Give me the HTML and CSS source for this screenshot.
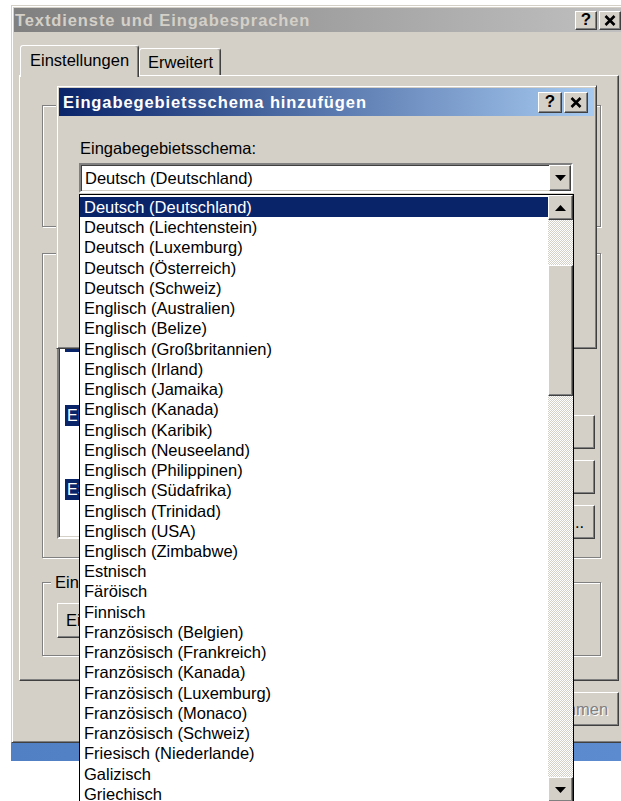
FILE: index.html
```html
<!DOCTYPE html>
<html lang="de">
<head>
<meta charset="utf-8">
<title>Textdienste und Eingabesprachen</title>
<link rel="stylesheet" href="styles.css">
</head>
<body>
<div class="desk">

  <!-- Main dialog (inactive, behind) -->
  <div class="win">
    <div class="cap off">
      <span class="cap-title">Textdienste und Eingabesprachen</span>
      <span class="cbtns">
        <span class="cbtn">?</span>
        <span class="cbtn"><svg width="12" height="11" viewBox="0 0 12 11"><path d="M1.5 1 L10.5 10 M10.5 1 L1.5 10" stroke="#000" stroke-width="2.6" fill="none"/></svg></span>
      </span>
    </div>

    <div class="tabs">
      <div class="tab sel">Einstellungen</div>
      <div class="tab plain">Erweitert</div>
    </div>

    <div class="panel">
      <!-- default locale group, covered by the modal dialog -->
      <div class="grp g1"></div>

      <!-- installed services -->
      <div class="grp g2">
        <div class="svc">
          <div class="tree">
            <div class="lang"><span class="flag">DE</span></div>
            <div class="leaf"></div>
            <div class="leaf"></div>
            <div class="lang"><span class="flag">EN</span></div>
            <div class="leaf"></div>
            <div class="leaf"></div>
            <div class="lang"><span class="flag">ES</span></div>
          </div>
          <div class="svc-btns">
            <div class="btn"></div>
            <div class="btn"></div>
            <div class="btn">Eigenschaften...</div>
          </div>
        </div>
      </div>

      <div class="grp g3">
        <span class="legend">Einstellungen</span>
        <div class="pref-row">
          <div class="btn auto">Eingabegebietsschema-Leiste...</div>
        </div>
      </div>
    </div>

    <div class="actions">
      <div class="btn">OK</div>
      <div class="btn">Abbrechen</div>
      <div class="btn off">Übernehmen</div>
    </div>
  </div>
  <div class="band"></div>

  <!-- Modal dialog on top -->
  <div class="dlg">
    <div class="cap on">
      <span class="cap-title">Eingabegebietsschema hinzufügen</span>
      <span class="cbtns">
        <span class="cbtn">?</span>
        <span class="cbtn"><svg width="12" height="11" viewBox="0 0 12 11"><path d="M1.5 1 L10.5 10 M10.5 1 L1.5 10" stroke="#000" stroke-width="2.6" fill="none"/></svg></span>
      </span>
    </div>
    <div class="dlg-body">
      <div class="field-label">Eingabegebietsschema:</div>
      <div class="combo">
        <span>Deutsch (Deutschland)</span>
        <span class="drop-btn"><svg width="11" height="6" viewBox="0 0 11 6"><path d="M0 0 H11 L5.5 6 Z"/></svg></span>
      </div>
    </div>
  </div>

  <!-- Open list of the combo box -->
  <div class="drop">
    <ul class="opts">
      <li class="opt sel">Deutsch (Deutschland)</li>
      <li class="opt">Deutsch (Liechtenstein)</li>
      <li class="opt">Deutsch (Luxemburg)</li>
      <li class="opt">Deutsch (Österreich)</li>
      <li class="opt">Deutsch (Schweiz)</li>
      <li class="opt">Englisch (Australien)</li>
      <li class="opt">Englisch (Belize)</li>
      <li class="opt">Englisch (Großbritannien)</li>
      <li class="opt">Englisch (Irland)</li>
      <li class="opt">Englisch (Jamaika)</li>
      <li class="opt">Englisch (Kanada)</li>
      <li class="opt">Englisch (Karibik)</li>
      <li class="opt">Englisch (Neuseeland)</li>
      <li class="opt">Englisch (Philippinen)</li>
      <li class="opt">Englisch (Südafrika)</li>
      <li class="opt">Englisch (Trinidad)</li>
      <li class="opt">Englisch (USA)</li>
      <li class="opt">Englisch (Zimbabwe)</li>
      <li class="opt">Estnisch</li>
      <li class="opt">Färöisch</li>
      <li class="opt">Finnisch</li>
      <li class="opt">Französisch (Belgien)</li>
      <li class="opt">Französisch (Frankreich)</li>
      <li class="opt">Französisch (Kanada)</li>
      <li class="opt">Französisch (Luxemburg)</li>
      <li class="opt">Französisch (Monaco)</li>
      <li class="opt">Französisch (Schweiz)</li>
      <li class="opt">Friesisch (Niederlande)</li>
      <li class="opt">Galizisch</li>
      <li class="opt">Griechisch</li>
    </ul>
    <div class="vscroll">
      <div class="sb-btn"><svg width="11" height="6" viewBox="0 0 11 6"><path d="M5.5 0 L11 6 H0 Z"/></svg></div>
      <div class="track"><div class="thumb"></div></div>
      <div class="sb-btn"><svg width="11" height="6" viewBox="0 0 11 6"><path d="M0 0 H11 L5.5 6 Z"/></svg></div>
    </div>
  </div>

</div>
</body>
</html>
```

FILE: styles.css
```css
* { box-sizing: border-box; }

html, body {
  margin: 0;
  background: #fff;
}

body {
  font-family: "Liberation Sans", Arial, sans-serif;
  font-size: 16.5px;
  color: #000;
}

.desk {
  position: relative;
  width: 621px;
  height: 801px;
  overflow: hidden;
  padding: 5px 0 0 11px;
}

/* ---------- shared 3D looks ---------- */
.cbtn, .btn, .sb-btn, .thumb, .drop-btn {
  background: #d4d0c8;
  border: 1px solid;
  border-color: #fff #404040 #404040 #fff;
  box-shadow: inset -1px -1px #808080;
}

/* ---------- window frame ---------- */
.win, .dlg {
  background: #d4d0c8;
  border: 1px solid;
  border-color: #d4d0c8 #404040 #404040 #d4d0c8;
  box-shadow: inset 1px 1px #fff, inset -1px -1px #808080;
  padding: 2px;
}

.win {
  width: 615px;
  height: 738px;
  display: flex;
  flex-direction: column;
}

.cap {
  flex: none;
  display: flex;
  align-items: center;
  justify-content: space-between;
  font-weight: bold;
  letter-spacing: 0.9px;
  white-space: nowrap;
}

.cap.off {
  height: 24px;
  padding: 0 2px 0 1px;
  background: linear-gradient(90deg, #808080, #c0c0c0);
  color: #d4d0c8;
}

.cap.on {
  height: 28px;
  padding: 0 6px 0 4px;
  background: linear-gradient(90deg, #0a246a, #a6caf0);
  color: #fff;
}

.cbtns {
  display: flex;
  gap: 2px;
}

.cbtn {
  width: 24px;
  height: 21px;
  display: flex;
  align-items: center;
  justify-content: center;
  font-size: 17px;
  letter-spacing: 0;
  color: #000;
}

.cap.off .cbtn {
  width: 22px;
  height: 19px;
}

/* ---------- tabs ---------- */
.tabs {
  flex: none;
  display: flex;
  align-items: flex-end;
  height: 30px;
  margin-top: 13px;
  padding-left: 6px;
}

.tab {
  height: 27px;
  display: flex;
  align-items: center;
  background: #d4d0c8;
  border: 1px solid;
  border-bottom: none;
  border-color: #fff #404040 transparent #fff;
  box-shadow: inset -1px 0 #808080;
  border-radius: 3px 3px 0 0;
}

.tab.sel {
  position: relative;
  z-index: 1;
  width: 119px;
  height: 32px;
  margin-bottom: -2px;
  padding: 0 0 3px 9px;
}

.tab.plain {
  width: 82px;
  padding-left: 8px;
}

.panel {
  flex: none;
  width: 600px;
  height: 606px;
  margin-left: 5px;
  border: 1px solid;
  border-color: #fff #404040 #404040 #fff;
  box-shadow: inset -1px -1px #808080;
  padding: 29px 0 0 22px;
}

/* ---------- group boxes ---------- */
.grp {
  position: relative;
  width: 559px;
  border: 1px solid #808080;
  box-shadow: inset 1px 1px #fff, 1px 1px #fff;
}

.legend {
  position: absolute;
  left: 8px;
  top: -11px;
  padding: 0 4px;
  line-height: 20px;
  background: #d4d0c8;
}

.g1 {
  height: 122px;
}

.g2 {
  height: 305px;
  margin-top: 26px;
  padding: 55px 5px 0 14px;
}

.g3 {
  height: 74px;
  margin-top: 24px;
  padding: 20px 14px 0;
}

/* ---------- installed services ---------- */
.svc {
  display: flex;
  gap: 10px;
  height: 230px;
}

.tree {
  flex: 1;
  background: #fff;
  border: 2px solid;
  border-color: #808080 #fff #fff #808080;
  box-shadow: inset 1px 1px #404040, inset -1px -1px #d4d0c8;
  padding: 20px 0 0 6px;
  overflow: hidden;
}

.lang {
  height: 21px;
  display: flex;
  align-items: center;
}

.flag {
  width: 26px;
  height: 21px;
  background: #0a246a;
  color: #fff;
  font-size: 16px;
  line-height: 21px;
  padding-left: 2px;
  overflow: hidden;
}

.leaf {
  height: 26.5px;
}

.svc-btns {
  width: 140px;
  display: flex;
  flex-direction: column;
  gap: 11px;
  padding-top: 106px;
}

.btn {
  width: 117px;
  height: 34px;
  display: flex;
  align-items: center;
  justify-content: center;
  white-space: nowrap;
}

.svc-btns .btn {
  width: 140px;
  height: 35px;
}

.btn.auto {
  width: auto;
  height: 35px;
  padding: 0 8px;
}

.btn.off {
  color: #808080;
  text-shadow: 1px 1px #fff;
}

.pref-row {
  display: flex;
  gap: 10px;
}

/* ---------- dialog buttons ---------- */
.actions {
  flex: none;
  display: flex;
  justify-content: flex-end;
  gap: 9px;
  margin-top: 11px;
  padding-right: 4px;
}

.band {
  height: 18px;
  background: linear-gradient(90deg, #5280c4, #5c8bd0);
}

/* ---------- add-locale dialog ---------- */
.dlg {
  position: absolute;
  left: 56px;
  top: 85px;
  width: 541px;
  height: 264px;
}

.dlg-body {
  padding: 22px 0 0 20px;
}

.field-label {
  line-height: 20px;
  padding-left: 1px;
}

.combo {
  margin-top: 5px;
  width: 494px;
  height: 30px;
  display: flex;
  align-items: center;
  background: #fff;
  border: 2px solid;
  border-color: #808080 #fff #fff #808080;
  box-shadow: inset 1px 1px #404040, inset -1px -1px #d4d0c8;
  padding-left: 4px;
  white-space: nowrap;
}

.drop-btn {
  margin-left: auto;
  width: 22px;
  height: 26px;
  display: flex;
  align-items: center;
  justify-content: center;
}

/* ---------- open list ---------- */
.drop {
  position: absolute;
  left: 79px;
  top: 194px;
  width: 495px;
  height: 609px;
  background: #fff;
  border: 1px solid #000;
  display: flex;
}

.opts {
  flex: 1;
  list-style: none;
  margin: 0;
  padding: 2px 0 0;
}

.opt {
  height: 20.24px;
  line-height: 20.24px;
  padding-left: 4px;
  white-space: nowrap;
}

.opt.sel {
  background: #0a246a;
  color: #fff;
}

.vscroll {
  width: 25px;
  display: flex;
  flex-direction: column;
}

.sb-btn {
  flex: none;
  height: 25px;
  display: flex;
  align-items: center;
  justify-content: center;
}

.track {
  flex: 1;
  padding-top: 45px;
  background: repeating-conic-gradient(#d4d0c8 0 25%, #fff 0 50%) 0 0 / 2px 2px;
}

.thumb {
  height: 131px;
}
```
